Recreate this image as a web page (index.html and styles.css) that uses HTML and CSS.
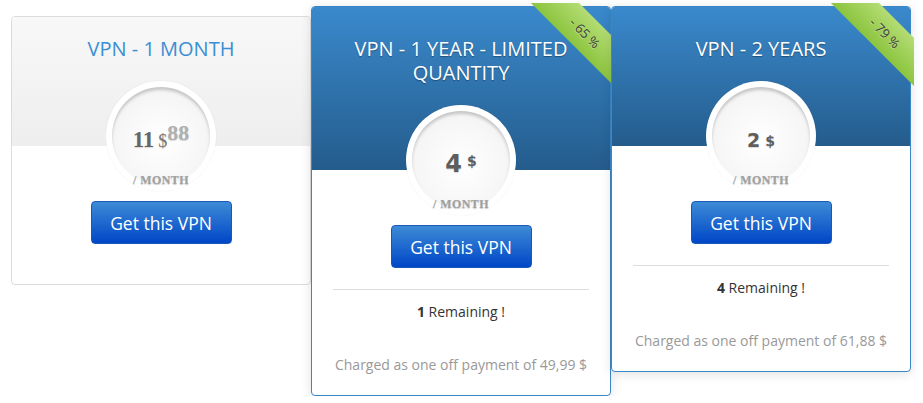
FILE: index.html
```html
<!DOCTYPE html>
<html>
<head>
<meta charset="utf-8">
<link rel="stylesheet" href="styles.css">
</head>
<body>
<div class="plans">
  <div class="card">
    <div class="card-head">
      <h2 class="title">VPN - 1 MONTH</h2>
      <div class="ring"><div class="disc">
        <span class="price p1"><b class="num">11</b> <span class="cur">$</span><sup class="cents">88</sup></span>
      </div></div>
    </div>
    <div class="card-body">
      <div class="per">/ MONTH</div>
      <a class="btn">Get this VPN</a>
    </div>
  </div>

  <div class="card featured">
    <div class="ribbon-wrap"><div class="ribbon">- 65 %</div></div>
    <div class="card-head">
      <h2 class="title">VPN - 1 YEAR - LIMITED QUANTITY</h2>
      <div class="ring"><div class="disc">
        <span class="price p2"><b class="num">4</b> <span class="cur">$</span></span>
      </div></div>
    </div>
    <div class="card-body">
      <div class="per">/ MONTH</div>
      <a class="btn">Get this VPN</a>
      <div class="extras">
        <div class="remaining"><b>1</b> Remaining !</div>
        <div class="charged">Charged as one off payment of 49,99 $</div>
      </div>
    </div>
  </div>

  <div class="card featured">
    <div class="ribbon-wrap"><div class="ribbon">- 79 %</div></div>
    <div class="card-head">
      <h2 class="title">VPN - 2 YEARS</h2>
      <div class="ring"><div class="disc">
        <span class="price p3"><b class="num">2</b> <span class="cur">$</span></span>
      </div></div>
    </div>
    <div class="card-body">
      <div class="per">/ MONTH</div>
      <a class="btn">Get this VPN</a>
      <div class="extras">
        <div class="remaining"><b>4</b> Remaining !</div>
        <div class="charged">Charged as one off payment of 61,88 $</div>
      </div>
    </div>
  </div>
</div>
</body>
</html>
```
FILE: styles.css
```css
* { box-sizing: border-box; }
html, body { margin: 0; padding: 0; background: #fff; }
body { font-family: "Open Sans", "Liberation Sans", sans-serif; }

.plans {
  display: flex;
  align-items: flex-start;
  padding-left: 11px;
}

.card {
  position: relative;
  width: 300px;
  margin-top: 16px;
  background: #fff;
  border: 1px solid #dcdcdc;
  border-radius: 4px;
  text-align: center;
}
.card.featured {
  margin-top: 6px;
  border-color: #3a87c8;
  box-shadow: 0 2px 12px rgba(0,0,0,0.12);
  z-index: 1;
}

.card-head {
  display: flow-root;
  padding-top: 20px;
  background: linear-gradient(#f8f8f8, #eeeeee);
  border-radius: 3px 3px 0 0;
}
.featured .card-head {
  padding-top: 30px;
  background: linear-gradient(#3a89cc, #245c8c);
}

.title {
  margin: 0 auto;
  padding: 0 28px;
  font-size: 20px;
  line-height: 24px;
  font-weight: 400;
  color: #3a8fd4;
}
.featured .title {
  color: #fff;
  text-shadow: 0 1px 1px rgba(0,0,0,0.35);
}

.ring {
  position: relative;
  z-index: 1;
  width: 110px;
  height: 110px;
  margin: 20px auto -45px;
  padding: 6px;
  border-radius: 50%;
  background: #fff;
  box-shadow: 0 0 2px rgba(0,0,0,0.06);
}
.disc {
  width: 98px;
  height: 98px;
  border-radius: 50%;
  background: radial-gradient(circle at 50% 55%, #ffffff 0%, #f7f7f7 55%, #eeeeee 100%);
  box-shadow: inset 0 3px 3px rgba(0,0,0,0.18);
  display: flex;
  align-items: center;
  justify-content: center;
  padding-top: 8px;
}

.price { white-space: nowrap; color: #666; text-shadow: 0 1px 1px rgba(0,0,0,0.15); }
.p1 { font-family: "Liberation Serif", serif; }
.p1 .num { font-size: 23px; font-weight: 700; }
.p1 .cur { font-size: 18px; font-weight: 400; color: #777; }
.p1 .cents { font-size: 22px; font-weight: 700; color: #b0b0b0; vertical-align: 7px; line-height: 0; }

.p2 { font-family: "DejaVu Sans", sans-serif; color: #5e5e5e; }
.p2 .num { font-size: 24px; font-weight: 700; }
.p2 .cur { font-size: 14px; font-weight: 700; vertical-align: 6px; }

.p3 { font-family: "DejaVu Sans", sans-serif; color: #5e5e5e; }
.p3 .num { font-size: 19px; font-weight: 700; }
.p3 .cur { font-size: 14px; font-weight: 700; vertical-align: 1px; }

.card-body {
  padding-bottom: 40px;
}
.featured .card-body { padding-bottom: 20px; }

.per {
  position: relative;
  z-index: 2;
  margin-top: 27px;
  font-family: "Liberation Serif", serif;
  font-weight: 700;
  font-size: 12px;
  line-height: 14px;
  letter-spacing: 0.4px;
  color: #a0a0a0;
  text-shadow: 0 1px 1px rgba(0,0,0,0.2);
}

.btn {
  display: flex;
  align-items: center;
  justify-content: center;
  width: 141px;
  height: 43px;
  margin: 14px auto 0;
  border: 1px solid #1a58b8;
  border-radius: 4px;
  background: linear-gradient(#3d8bd6, #0046c7);
  color: #fff;
  font-size: 17.5px;
  text-decoration: none;
}

.extras {
  margin: 21px 21px 0;
  border-top: 1px solid #dddddd;
}
.remaining {
  margin-top: 12px;
  font-size: 14px;
  line-height: 20px;
  color: #333;
}
.charged {
  margin-top: 33px;
  font-size: 14px;
  line-height: 20px;
  color: #999;
}

.ribbon-wrap {
  position: absolute;
  top: -4px;
  right: -4px;
  width: 85px;
  height: 85px;
  overflow: hidden;
  z-index: 3;
}
.ribbon {
  position: absolute;
  left: -14px;
  top: 13px;
  width: 140px;
  height: 34px;
  line-height: 34px;
  transform: rotate(45deg);
  background: linear-gradient(#b4dc74, #8cc43f);
  color: #3a3a3a;
  font-size: 13px;
  text-align: center;
  text-shadow: 0 1px 0 rgba(255,255,255,0.4);
}
```
